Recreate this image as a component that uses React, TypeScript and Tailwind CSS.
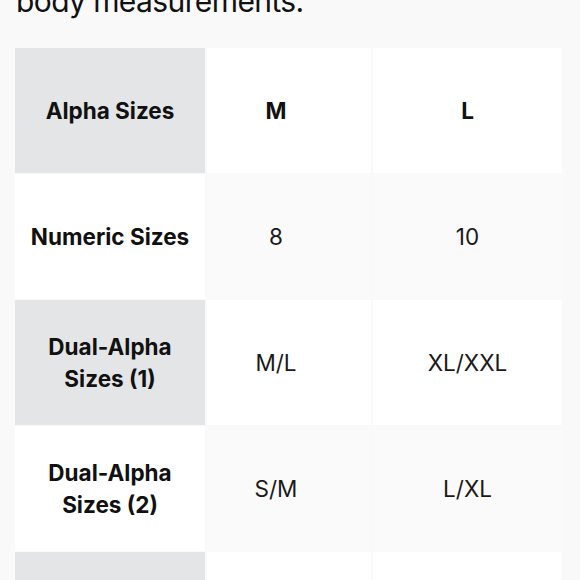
const ROWS = [
  { label: ["Alpha Sizes"], values: ["M", "L"], head: true },
  { label: ["Numeric Sizes"], values: ["8", "10"] },
  { label: ["Dual-Alpha", "Sizes (1)"], values: ["M/L", "XL/XXL"] },
  { label: ["Dual-Alpha", "Sizes (2)"], values: ["S/M", "L/XL"] },
  { label: [], values: ["", ""] },
];

export default function App() {
  return (
    <div
      className="h-[580px] w-[580px] overflow-hidden bg-[#f9f9f9] text-[#111]"
      style={{ fontFamily: "Inter, 'Liberation Sans', sans-serif" }}
    >
      {/* tail of the intro paragraph */}
      <p className="-mt-[19px] pl-[16px] text-[30px] leading-[40px] tracking-[-0.6px] text-[#111]">
        body measurements.
      </p>

      <div className="ml-[15px] mt-[27px] grid grid-cols-[190px_164px_189px] gap-x-[2px] gap-y-[1px]">
        {ROWS.map((r, i) => {
          const odd = i % 2 === 0;
          return (
            <div key={i} className="contents">
              <div
                className={`flex h-[125px] flex-col items-center justify-center text-center text-[22.5px] font-bold leading-[32px] ${
                  odd ? "bg-[#e4e5e7]" : "bg-white"
                }`}
              >
                {r.label.map((l) => (
                  <span key={l}>{l}</span>
                ))}
              </div>
              {r.values.map((v, j) => (
                <div
                  key={j}
                  className={`flex h-[125px] items-center justify-center text-[22.5px] ${
                    r.head ? "font-bold" : "font-normal text-[#1a1a1a]"
                  } ${j === 0 ? "pr-[26px]" : ""} ${odd ? "bg-white" : "bg-[#fafafa]"}`}
                >
                  {v}
                </div>
              ))}
            </div>
          );
        })}
      </div>
    </div>
  );
}
